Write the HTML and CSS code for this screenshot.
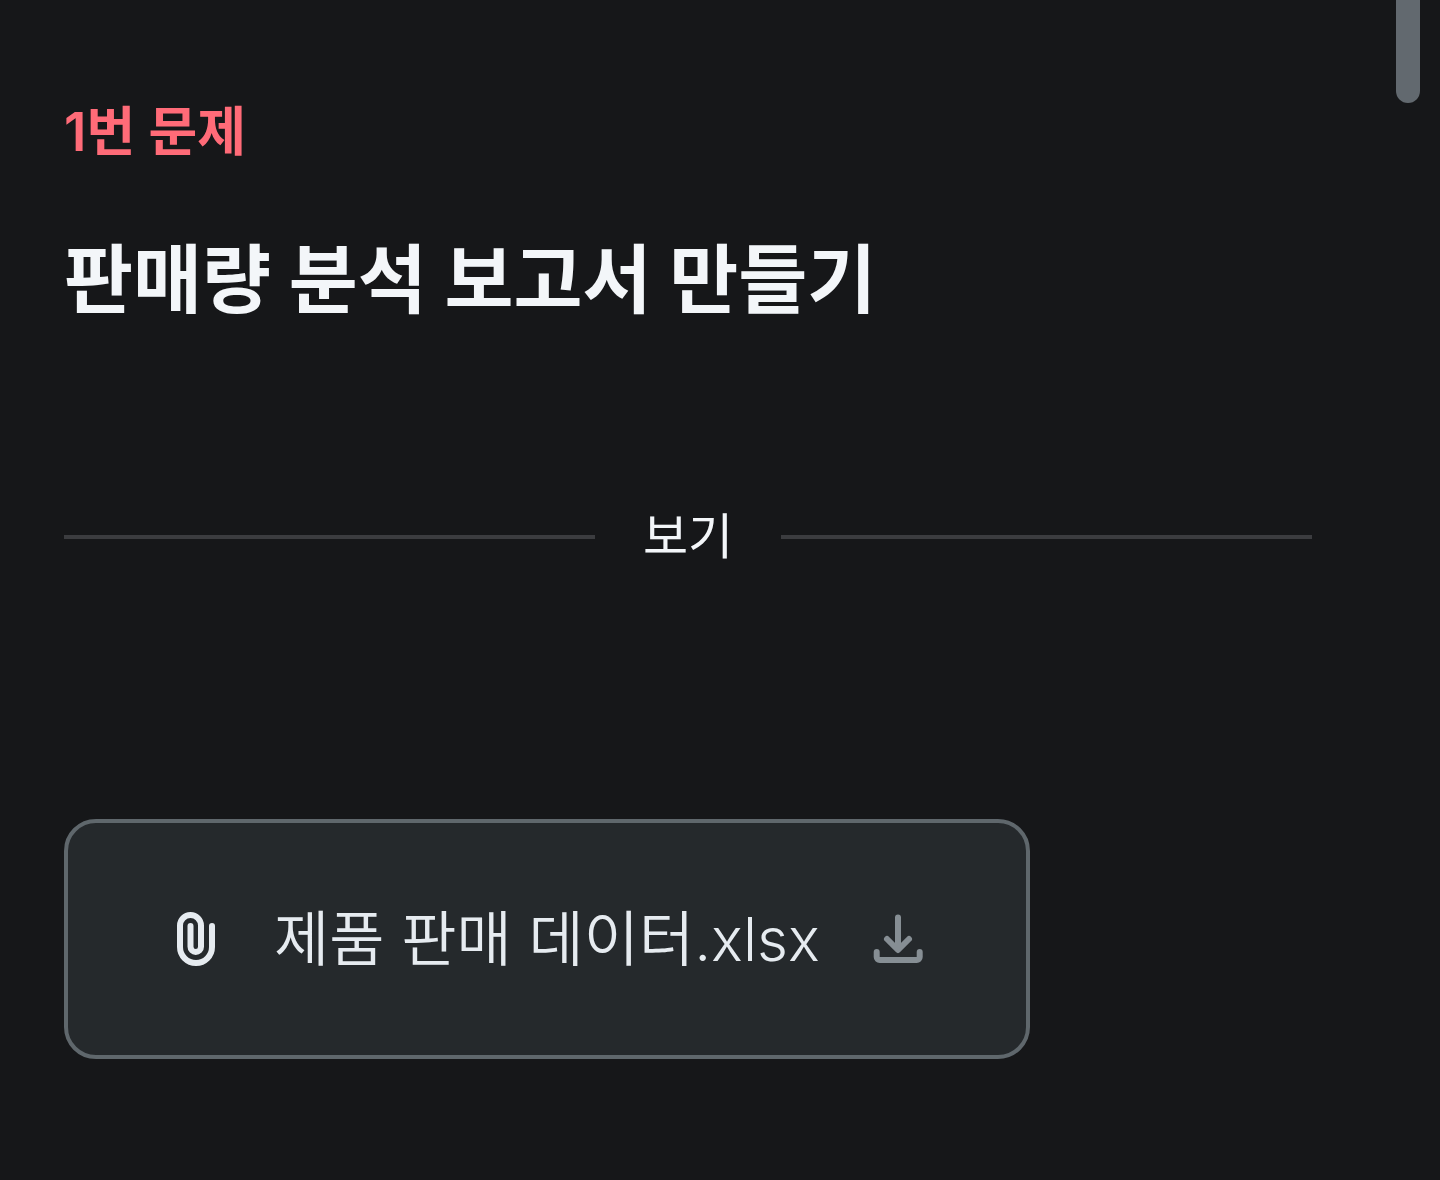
FILE: index.html
```html
<!DOCTYPE html>
<html lang="ko">
  <head>
    <meta charset="UTF-8" />
    <meta name="viewport" content="width=device-width, initial-scale=1.0" />
    <title>판매량 분석 보고서 만들기</title>
    <link rel="stylesheet" href="styles.css">
  </head>
  <body>
    <main class="problem">
      <header class="problem-header">
        <p class="problem-number">1번 문제</p>
        <h1 class="problem-title">판매량 분석 보고서 만들기</h1>
      </header>

      <section>
        <h2 class="divider">보기</h2>

        <button type="button" class="file">
          <svg class="icon" viewBox="0 0 72 72" aria-hidden="true">
            <path d="M52 23v21a16 16 0 0 1-32 0V22.5a10.5 10.5 0 0 1 21 0v21.2a5.25 5.25 0 0 1-10.5 0V23" />
          </svg>
          <span>제품 판매 데이터.xlsx</span>
          <svg class="icon icon-download" viewBox="0 0 72 72" aria-hidden="true">
            <path d="M36 14.5V46M25 36l11 11 11-11M14.7 49v5a3 3 0 0 0 3 3h37a3 3 0 0 0 3-3v-5" />
          </svg>
        </button>
      </section>
    </main>

    <div class="scroll-thumb"></div>
  </body>
</html>
```

FILE: styles.css
```css
* {
  box-sizing: border-box;
}

body {
  position: relative;
  margin: 0;
  min-height: 100vh;
  background: #161719;
  color: #f3f6f9;
  font-family: Inter, "Noto Sans CJK KR", sans-serif;
}

h1,
h2,
p {
  margin: 0;
}

.problem {
  padding: 94px 128px 120px 64px;
}

.problem-header {
  display: flex;
  flex-direction: column;
  gap: 58px;
  margin-bottom: 167px;
}

.problem-number {
  color: #ff6b78;
  font-size: 53px;
  font-weight: 600;
  line-height: 76px;
}

.problem-title {
  font-size: 75px;
  font-weight: 700;
  line-height: 104px;
}

/* label with a line on both sides */
.divider {
  display: flex;
  align-items: center;
  gap: 48px;
  margin-bottom: 244px;
  font-size: 49px;
  font-weight: 400;
  line-height: 76px;
}
.divider::before,
.divider::after {
  content: "";
  flex: 1;
  height: 4px;
  background: #3b3c3f;
}

/* attached file */
.file {
  display: flex;
  align-items: center;
  gap: 42px;
  max-width: 100%;
  padding: 72px 92px;
  border: 4px solid #5f676c;
  border-radius: 32px;
  background: #25292c;
  color: #e6ebf0;
  font-family: inherit;
  font-size: 60px;
  font-weight: 350;
  line-height: 88px;
  cursor: pointer;
}

.icon {
  flex: none;
  width: 72px;
  height: 72px;
  fill: none;
  stroke: currentColor;
  stroke-width: 6;
  stroke-linecap: round;
  stroke-linejoin: round;
}
.icon-download {
  color: #868e94;
}

.scroll-thumb {
  position: absolute;
  top: 0;
  right: 20px;
  width: 24px;
  height: 103px;
  border-radius: 0 0 12px 12px;
  background: #62696f;
}
```
